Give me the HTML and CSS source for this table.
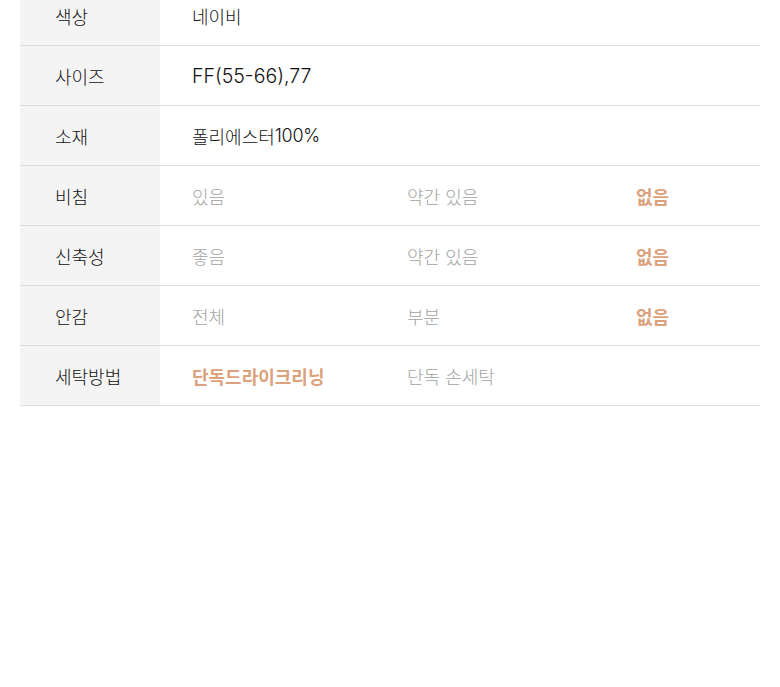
FILE: index.html
```html
<!DOCTYPE html>
<html lang="ko">
<head>
<meta charset="utf-8">
<link rel="stylesheet" href="styles.css">
</head>
<body>
<div class="spec">
  <div class="row"><div class="th">색상</div><div class="td">네이비</div></div>
  <div class="row"><div class="th">사이즈</div><div class="td"><span class="lat">FF(55-66),77</span></div></div>
  <div class="row"><div class="th">소재</div><div class="td">폴리에스터<span class="lat pct">100%</span></div></div>
  <div class="row"><div class="th">비침</div><div class="td opts"><span>있음</span><span>약간 있음</span><span class="on">없음</span></div></div>
  <div class="row"><div class="th">신축성</div><div class="td opts"><span>좋음</span><span>약간 있음</span><span class="on">없음</span></div></div>
  <div class="row"><div class="th">안감</div><div class="td opts"><span>전체</span><span>부분</span><span class="on">없음</span></div></div>
  <div class="row"><div class="th">세탁방법</div><div class="td opts"><span class="on">단독드라이크리닝</span><span>단독 손세탁</span><span></span></div></div>
</div>
</body>
</html>
```

FILE: styles.css
```css
html, body {
  margin: 0;
  padding: 0;
  background: #fff;
}
body {
  font-family: Inter, "Noto Sans CJK KR", "Noto Sans", sans-serif;
  color: #111;
}
.spec {
  margin: -14px 20px 0 20px;
}
.row {
  display: flex;
  height: 60px;
  border-bottom: 1px solid #dddddd;
  box-sizing: border-box;
}
.th {
  width: 140px;
  flex: none;
  background: #f4f4f4;
  padding-left: 35px;
  box-sizing: border-box;
  display: flex;
  align-items: center;
  font-size: 18px;
  font-weight: 300;
  color: #111;
}
.td {
  flex: 1;
  padding-left: 32px;
  display: flex;
  align-items: center;
  font-size: 18px;
  font-weight: 300;
  color: #111;
}
.lat {
  font-weight: 330;
  font-size: 19.5px;
}
.pct {
  font-size: 18px;
  letter-spacing: -0.3px;
}
.opts {
  display: grid;
  grid-template-columns: 215px 229px 1fr;
  align-items: center;
  color: #a3a3a3;
}
.opts .on {
  color: #dca27d;
  font-weight: 600;
}
```
